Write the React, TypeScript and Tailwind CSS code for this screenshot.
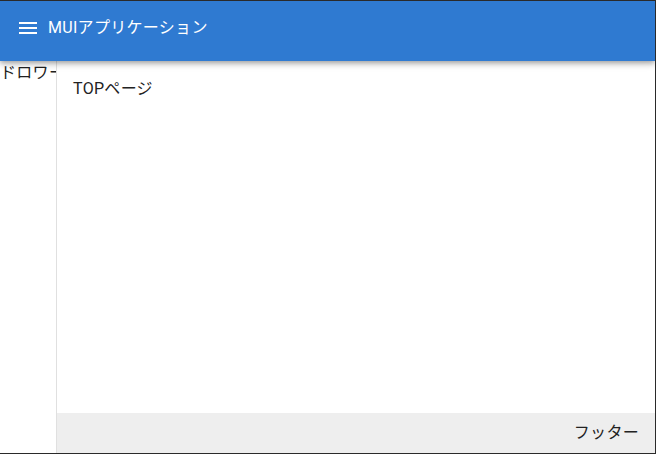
const font = "font-['Roboto','Noto_Sans_CJK_JP',sans-serif]";

function MenuIcon() {
  return (
    <svg viewBox="0 0 24 24" className="w-6 h-6 fill-white shrink-0">
      <path d="M3 18h18v-2H3zm0-5h18v-2H3zm0-7v2h18V6z" />
    </svg>
  );
}

export default function App() {
  return (
    <div className={`${font} tracking-[0.3px] w-[656px] h-[454px] flex flex-col bg-white border-t border-r border-b border-[#2a2a2a] overflow-hidden`}>
      {/* AppBar */}
      <header className="relative z-10 h-[60px] shrink-0 bg-[#2f7ad1] flex items-start pt-[15px] px-4 gap-2 shadow-[0_2px_4px_-1px_rgba(0,0,0,0.2),0_4px_5px_0_rgba(0,0,0,0.14),0_1px_10px_0_rgba(0,0,0,0.12)]">
        <MenuIcon />
        <h1 className="text-white text-base leading-6">MUIアプリケーション</h1>
      </header>

      <div className="flex flex-1 min-h-0">
        {/* Drawer */}
        <aside className="w-[57px] shrink-0 border-r border-[#e0e0e0] overflow-hidden">
          <p className="text-base leading-6 text-[#212121] whitespace-nowrap">ドロワー</p>
        </aside>

        {/* Main */}
        <div className="flex-1 flex flex-col min-w-0">
          <main className="flex-1 p-4">
            <p className="text-base leading-6 text-[#222]">TOPページ</p>
          </main>
          <footer className="h-10 shrink-0 bg-[#eeeeee] flex items-center justify-end pr-4">
            <span className="text-base leading-6 text-[#222]">フッター</span>
          </footer>
        </div>
      </div>
    </div>
  );
}
